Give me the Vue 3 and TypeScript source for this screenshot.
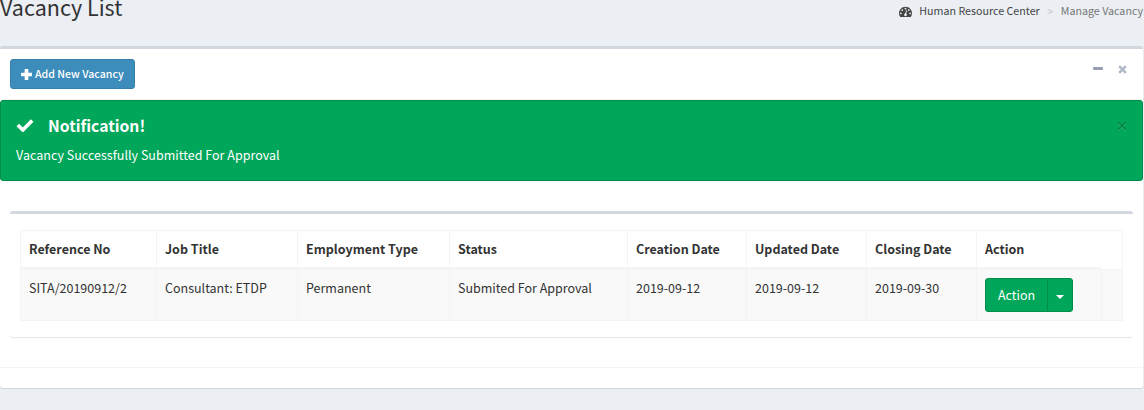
<script setup lang="ts">
interface Vacancy {
  reference: string
  title: string
  employment: string
  status: string
  created: string
  updated: string
  closing: string
}

const headings: string[] = [
  'Reference No',
  'Job Title',
  'Employment Type',
  'Status',
  'Creation Date',
  'Updated Date',
  'Closing Date',
  'Action',
]

const vacancies: Vacancy[] = [
  {
    reference: 'SITA/20190912/2',
    title: 'Consultant: ETDP',
    employment: 'Permanent',
    status: 'Submited For Approval',
    created: '2019-09-12',
    updated: '2019-09-12',
    closing: '2019-09-30',
  },
]
</script>

<template>
  <div class="page">
    <header class="content-header">
      <h1>Vacancy List</h1>
      <nav class="breadcrumb">
        <svg class="dash" viewBox="0 0 1792 1792"><path fill="currentColor" d="M384 1152q0-53-37.500-90.500t-90.500-37.500-90.500 37.500-37.500 90.500 37.500 90.500 90.500 37.500 90.500-37.500 37.500-90.500zm192-448q0-53-37.500-90.500t-90.500-37.500-90.500 37.500-37.500 90.500 37.500 90.500 90.500 37.500 90.500-37.500 37.500-90.500zm428 481l101-382q6-26-7.500-48.500t-38.500-29.500-48 6.500-30 39.500l-101 382q-60 5-107 43.500t-63 98.500q-20 77 20 146t117 89 146-20 89-117q16-60-6-117t-72-91zm660-33q0-53-37.500-90.500t-90.500-37.500-90.500 37.500-37.500 90.500 37.500 90.500 90.500 37.500 90.500-37.500 37.500-90.500zm-640-640q0-53-37.500-90.500t-90.500-37.500-90.500 37.500-37.500 90.500 37.500 90.500 90.500 37.500 90.500-37.500 37.500-90.500zm448 192q0-53-37.500-90.500t-90.500-37.500-90.500 37.500-37.500 90.500 37.500 90.500 90.500 37.500 90.500-37.500 37.500-90.500zm320 448q0 261-141 483-19 29-54 29h-1402q-35 0-54-29-141-221-141-483 0-182 71-348t191-286 286-191 348-71 348 71 286 191 191 286 71 348z" /></svg>
        <a>Human Resource Center</a>
        <span class="sep">&gt;</span>
        <span class="current">Manage Vacancy</span>
      </nav>
    </header>

    <main class="box">
      <div class="box-header">
        <button class="btn-add" type="button">
          <svg viewBox="0 0 12 12"><path fill="currentColor" d="M4.300 1h3.400v3.300H11v3.400H7.700V11H4.300V7.700H1V4.300h3.300z" /></svg>
          <span>Add New Vacancy</span>
        </button>
        <div class="tools">
          <span class="minus"></span>
          <svg class="times" viewBox="0 0 10 10"><path stroke="currentColor" stroke-width="2.800" d="M1.300 1.300l7.400 7.400M8.700 1.300L1.300 8.700" /></svg>
        </div>
      </div>

      <section class="alert">
        <div class="alert-title">
          <svg class="check" viewBox="0 0 18 14"><path fill="none" stroke="currentColor" stroke-width="3.600" d="M1.800 7l5 5L16.200 2.400" /></svg>
          <h4>Notification!</h4>
          <svg class="close" viewBox="0 0 10 10"><path class="glow" d="M1 2.200l8 7.400M9 2.200L1 9.600" /><path class="cross" d="M1 1l8 7.600M9 1L1 8.600" /></svg>
        </div>
        <p>Vacancy Successfully Submitted For Approval</p>
      </section>

      <section class="inner">
        <div class="grid head">
          <div v-for="h in headings" :key="h" class="cell"><span>{{ h }}</span></div>
          <div class="cell last"></div>
        </div>
        <div v-for="v in vacancies" :key="v.reference" class="grid row">
          <div v-for="(value, key) in v" :key="key" class="cell"><span>{{ value }}</span></div>
          <div class="cell">
            <div class="btn-group">
              <button class="btn-action" type="button">Action</button>
              <button class="btn-caret" type="button"><i class="caret"></i></button>
            </div>
          </div>
          <div class="cell last"></div>
        </div>
      </section>

      <footer class="box-footer"></footer>
    </main>
  </div>
</template>

<style>
body {
  background: #ebeef3;
}
</style>

<style scoped>
* {
  box-sizing: border-box;
}
.page {
  height: 410px;
  overflow: hidden;
  background: #ebeef3;
  color: #333;
  font: 12.5px/20px "Noto Sans CJK SC", "Noto Sans", sans-serif;
  white-space: nowrap;
}
button {
  font: inherit;
  color: #fff;
  padding: 0;
}
.content-header {
  height: 46px;
  display: flex;
  justify-content: space-between;
  align-items: flex-start;
}
h1 {
  margin: -6px 0 0;
  font-size: 21.5px;
  line-height: 26px;
  font-weight: 400;
}
.breadcrumb {
  display: flex;
  align-items: center;
  height: 22px;
  padding-right: 1px;
  font-size: 10.700px;
  color: #444;
}
.dash {
  width: 13px;
  height: 13px;
  margin-right: 7px;
}
.sep {
  width: 21px;
  text-align: center;
  color: #c4c4c4;
  font-size: 11px;
}
.current {
  color: #777;
}
.box {
  width: 1143px;
  height: 342px;
  background: #fff;
  border-top: 3px solid #d2d6de;
  border-radius: 3px;
  box-shadow: 0 1px 1px rgba(0, 0, 0, 0.1);
  display: flex;
  flex-direction: column;
}
.box-header {
  height: 51px;
  padding: 10px 16px 0 10px;
  border-bottom: 1px solid #f4f4f4;
  display: flex;
  justify-content: space-between;
}
.btn-add {
  width: 125px;
  height: 30px;
  border: 1px solid #367fa9;
  border-radius: 3px;
  background: #3c8dbc;
  font-size: 10.600px;
  font-weight: 500;
  line-height: 18px;
  display: flex;
  align-items: center;
  padding-left: 9px;
  gap: 2px;
}
.btn-add svg {
  width: 13px;
  height: 13px;
}
.tools {
  display: flex;
  align-items: center;
  height: 20px;
  gap: 15px;
  color: #b0b8c9;
}
.minus {
  width: 10px;
  height: 3px;
  margin-top: -1px;
  border-radius: 1px;
  background: #97a0b3;
}
.times {
  width: 9px;
  height: 9px;
}
.alert {
  height: 81px;
  border: 1px solid #008d4c;
  border-radius: 3px;
  background: #00a65a;
  color: #fff;
  padding: 14px 15px 0;
}
.alert-title {
  display: flex;
  align-items: center;
  height: 20px;
}
.check {
  width: 18px;
  height: 14px;
}
h4 {
  margin: 2px 0 0 14px;
  font-size: 15.700px;
  line-height: 20px;
  font-weight: 700;
}
.close {
  width: 10px;
  height: 10px;
  margin: 2px 0 0 auto;
  fill: none;
}
.cross {
  stroke: #00854a;
  stroke-width: 1.500;
}
.glow {
  stroke: #33b87b;
  stroke-width: 1.200;
}
.alert p {
  margin: 10px 0 0;
  letter-spacing: 0.020px;
}
.inner {
  margin: 30px 10px 0;
  height: 126px;
  border-top: 3px solid #d2d6de;
  border-radius: 3px;
  box-shadow: 0 1px 1px rgba(0, 0, 0, 0.1);
  padding: 16px 10px 0;
}
.grid {
  display: grid;
  grid-template-columns: 136px 141px 152px 178px 119px 120px 110px 125px 22px;
}
.cell {
  border-left: 1px solid #f4f4f4;
  padding-left: 8px;
}
.head .cell {
  height: 39px;
  border-top: 1px solid #f4f4f4;
  border-bottom: 2px solid #f4f4f4;
  padding-top: 8px;
  font-weight: 700;
}
.head .last {
  border-left-color: transparent;
  border-bottom: 0;
}
.last {
  border-right: 1px solid #f4f4f4;
}
.row .cell {
  height: 52px;
  border-top: 1px solid #f4f4f4;
  border-bottom: 1px solid #f4f4f4;
  background: #f9f9f9;
  padding-top: 8px;
}
.btn-group {
  display: flex;
  width: 88px;
  height: 34px;
}
.btn-action {
  width: 63px;
  border: 1px solid #008d4c;
  border-radius: 3px 0 0 3px;
  background: #00a65a;
}
.btn-caret {
  width: 26px;
  margin-left: -1px;
  border: 1px solid #008d4c;
  border-radius: 0 3px 3px 0;
  background: #00a65a;
  display: flex;
  align-items: center;
  justify-content: center;
}
.caret {
  border: 4px solid transparent;
  border-top-color: #fff;
  border-bottom: 0;
  margin-top: 3px;
}
.box-footer {
  margin-top: auto;
  height: 21px;
  border-top: 1px solid #f4f4f4;
}
</style>
